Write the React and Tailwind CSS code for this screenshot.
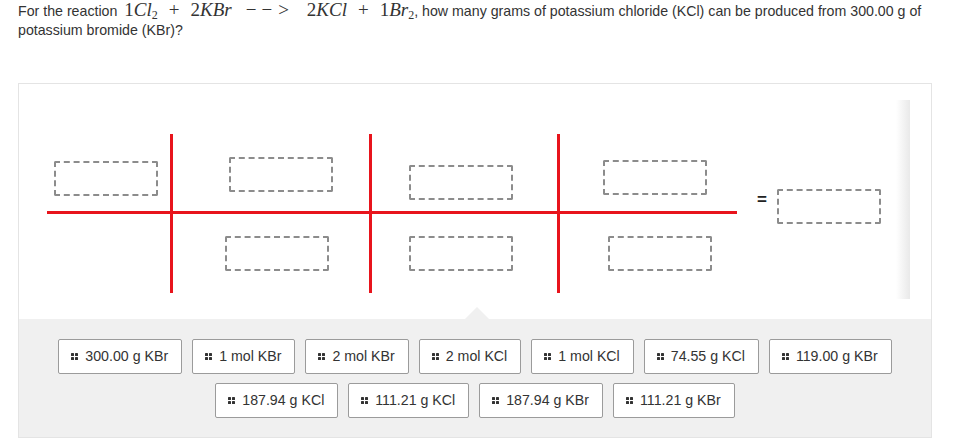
import React from "react";

const Grip = () => (
  <svg width="7" height="7" viewBox="0 0 7 7" className="shrink-0">
    <rect x="0" y="0" width="3" height="3" rx="0.6" fill="#333" />
    <rect x="4" y="0" width="3" height="3" rx="0.6" fill="#333" />
    <rect x="0" y="4" width="3" height="3" rx="0.6" fill="#333" />
    <rect x="4" y="4" width="3" height="3" rx="0.6" fill="#333" />
  </svg>
);

const Tile = ({ label }) => (
  <div className="flex h-[35px] items-center gap-[7px] rounded-[2px] border border-[#9b9b9b] bg-white pl-[12px] pr-[13px] text-[14.2px] text-[#333]">
    <Grip />
    <span>{label}</span>
  </div>
);

const Drop = ({ x, y }) => (
  <div
    className="absolute h-[35px] w-[104px] rounded-[2px] border-2 border-dashed border-[#8c8c8c]"
    style={{ left: x, top: y }}
  />
);

const M = ({ children }) => <span className="italic">{children}</span>;

export default function App() {
  const row1 = ["300.00 g KBr", "1 mol KBr", "2 mol KBr", "2 mol KCl", "1 mol KCl", "74.55 g KCl", "119.00 g KBr"];
  const row2 = ["187.94 g KCl", "111.21 g KCl", "187.94 g KBr", "111.21 g KBr"];
  const drops = [
    [35, 77],
    [210, 73],
    [206, 152],
    [390, 81],
    [390, 152],
    [584, 76],
    [589, 152],
    [758, 105],
  ];
  return (
    <div className="min-h-[447px] bg-white font-['Liberation_Sans',Arial,sans-serif] text-[#333]">
      <div className="px-[18px] pt-0 text-[14.2px] leading-[19px]">
        <div className="whitespace-nowrap">
          For the reaction{" "}
          <span className="ml-[3px] font-['Liberation_Serif',serif] text-[19px] leading-[19px]">
            <span>1</span><M>Cl</M><sub className="text-[12px]">2</sub>
            <span className="mx-[11px]">+</span>
            <span>2</span><M>KBr</M>
            <span className="ml-[14px] mr-[18px]">−<span className="ml-[5px]">−</span><span className="ml-[6px]">&gt;</span></span>
            <span>2</span><M>KCl</M>
            <span className="mx-[11px]">+</span>
            <span>1</span><M>Br</M><sub className="text-[12px]">2</sub>
          </span>
          , how many grams of potassium chloride (KCl) can be produced from 300.00 g of
        </div>
        <div>potassium bromide (KBr)?</div>
      </div>

      <div className="ml-[18px] mt-[43px] w-[914px] border border-[#e4e4e4]">
        <div className="relative h-[235px] bg-white">
          <div className="absolute left-[28px] top-[127px] h-[3px] w-[690px] bg-[#e8141c]" />
          <div className="absolute left-[151px] top-[50px] h-[159px] w-[3px] bg-[#e8141c]" />
          <div className="absolute left-[350px] top-[50px] h-[159px] w-[3px] bg-[#e8141c]" />
          <div className="absolute left-[538px] top-[50px] h-[159px] w-[3px] bg-[#e8141c]" />
          {drops.map(([x, y], i) => (
            <Drop key={i} x={x} y={y} />
          ))}
          <div className="absolute left-[738px] top-[106px] text-[17px] font-bold leading-[20px] text-[#222]">=</div>
          <div className="absolute left-[877px] top-[16px] h-[199px] w-[14px] bg-gradient-to-r from-white to-[#e9e9e9]" />
        </div>
        <div className="relative bg-[#f0f0f0] pb-[19px] pt-[20px]">
          <div className="absolute left-[446px] top-[-12px] h-0 w-0 border-x-[12px] border-b-[12px] border-x-transparent border-b-[#f0f0f0]" />
          <div className="flex justify-center gap-[10px]">
            {row1.map((t) => (
              <Tile key={t} label={t} />
            ))}
          </div>
          <div className="mt-[9px] flex justify-center gap-[10px]">
            {row2.map((t) => (
              <Tile key={t} label={t} />
            ))}
          </div>
        </div>
      </div>
    </div>
  );
}
